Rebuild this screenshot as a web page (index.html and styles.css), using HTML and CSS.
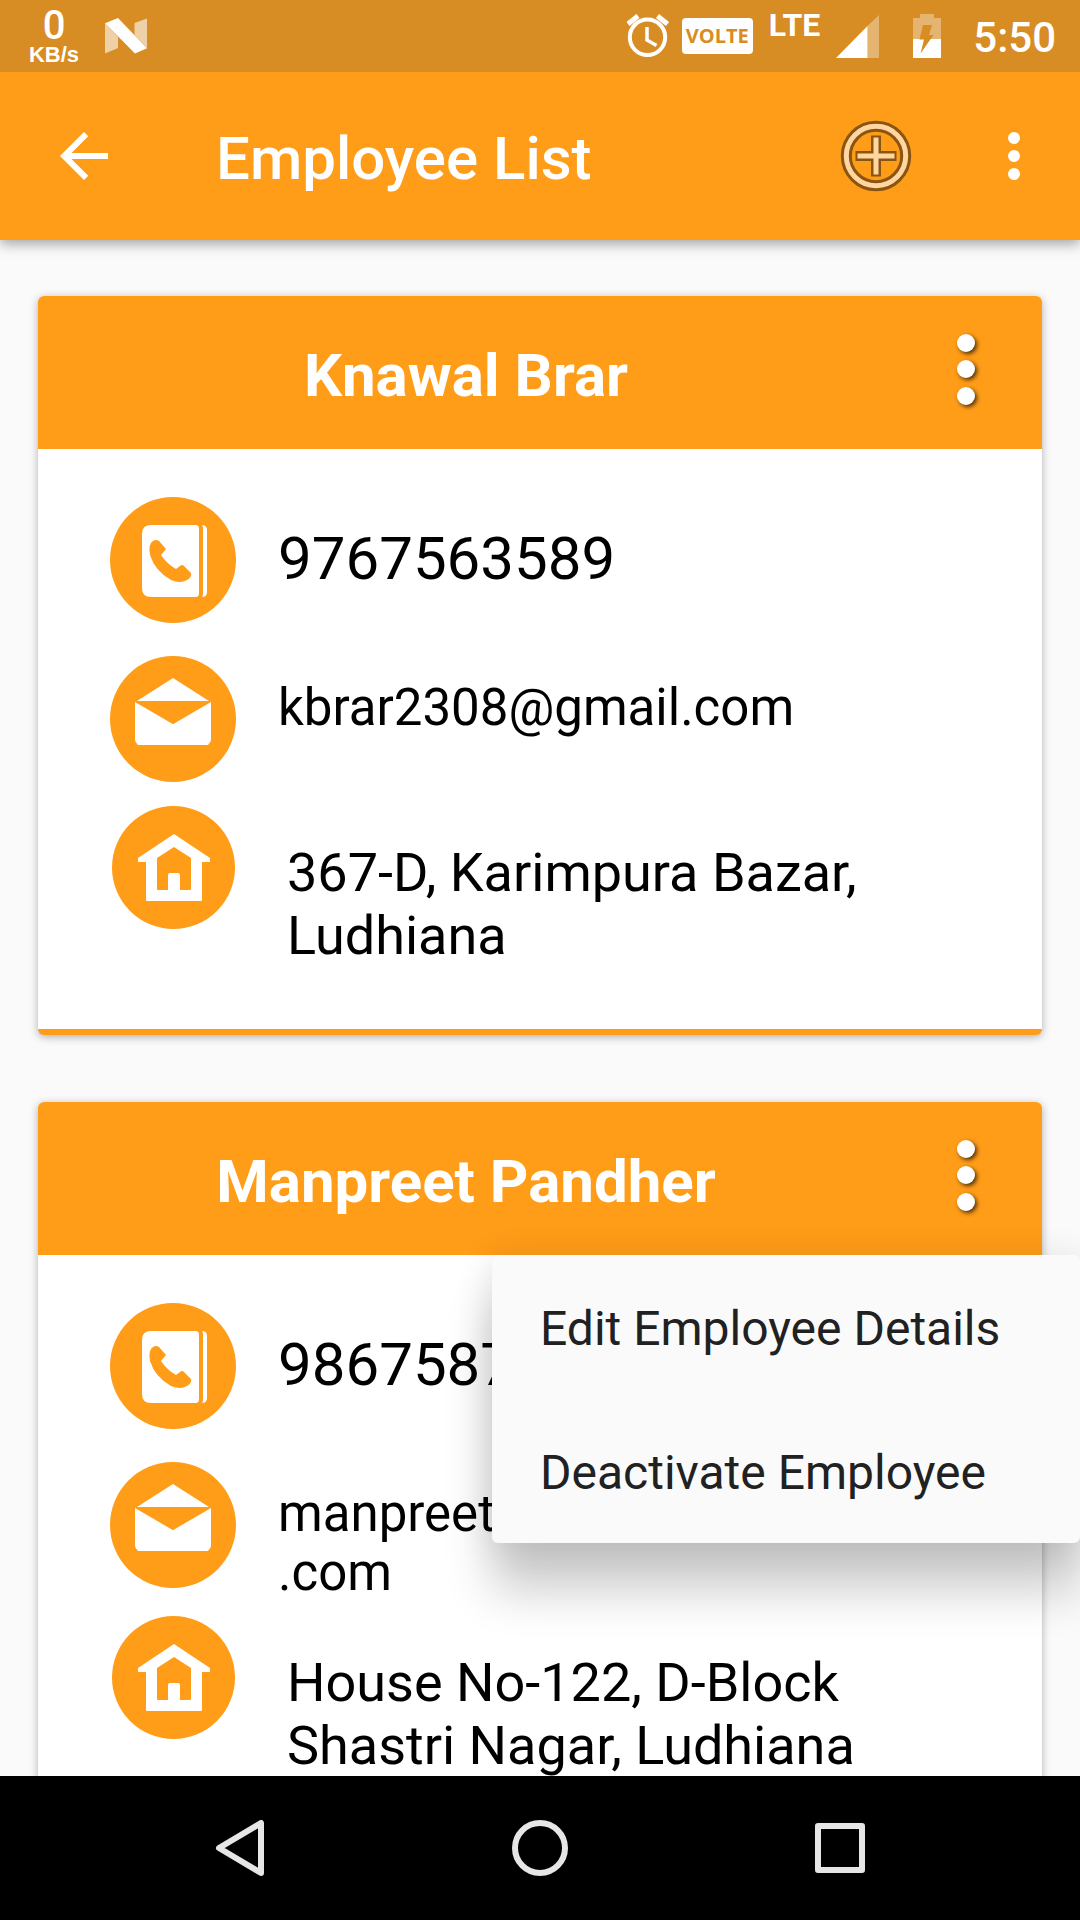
FILE: index.html
```html
<!DOCTYPE html>
<html lang="en">
<head>
<meta charset="utf-8">
<meta name="viewport" content="width=device-width, initial-scale=1">
<title>Employee List</title>
<link rel="stylesheet" href="styles.css">
</head>
<body>
<svg class="sprite" width="0" height="0" aria-hidden="true">
  <symbol id="i-phone" viewBox="0 0 126 126">
    <circle cx="63" cy="63" r="63" fill="#ff9c18"/>
    <path fill="#fff" d="M41 28H86Q89 28 89 32V96Q89 100 86 100H41Q32 100 32 91V37Q32 28 41 28ZM92 28Q97 28 97 33V95Q97 100 92 100Q93 99 93 96V32Q93 29 92 28Z"/>
    <path fill="#ff9c18" d="M49 44L56 52L51 58Q57 67 66 72L70 69Q72 67 74 69L81 76Q82 80 77 83Q70 87 61 83Q45 74 40 58Q38 47 43 44Q46 42 49 44Z"/>
  </symbol>
  <symbol id="i-mail" viewBox="0 0 126 126">
    <circle cx="63" cy="63" r="63" fill="#ff9c18"/>
    <path fill="#fff" d="M63 22L99 45H27ZM25 46L61 67Q63 69 65 67L101 46V84Q101 86 98 89H28Q25 86 25 84Z"/>
  </symbol>
  <symbol id="i-home" viewBox="0 0 123 123">
    <circle cx="61.5" cy="61.5" r="61.5" fill="#ff9c18"/>
    <path fill="#fff" fill-rule="evenodd" d="M62 28L98 52V56H90V94Q90 95 89 95H35Q34 95 34 94V56H26V52ZM62 41L45 52V83Q45 84 46 84H56V69Q56 67 58 67H66Q68 67 68 69V84H78Q79 84 79 83V52Z"/>
  </symbol>
  <symbol id="i-dots" viewBox="0 0 24 76">
    <g fill="#fff"><circle cx="12" cy="12" r="9"/><circle cx="12" cy="38" r="9"/><circle cx="12" cy="65" r="9"/></g>
  </symbol>
</svg>

<div class="status">
  <div class="speed"><span class="speed-value">0</span><span class="speed-unit">KB/s</span></div>
  <svg class="nougat" width="42" height="36" viewBox="0 0 42 36"><path fill="#fff" fill-opacity=".6" d="M0 5L13 19V30L0 35.5ZM29.5 5L42 .5V30L29.5 17Z"/><path fill="#fff" d="M0 5.300L13 0L42 30.300L30 35.5Z"/></svg>
  <div class="status-right">
    <svg class="alarm" width="42" height="44" viewBox="0 0 42 44" fill="none" stroke="#fff"><circle cx="20.5" cy="23.3" r="17.7" stroke-width="4"/><path stroke-width="3.5" d="M20 13V26L29.5 31.5"/><path stroke-width="5" d="M1 10L11 2M30.5 2L40.5 10"/></svg>
    <span class="volte">VOLTE</span>
    <span class="lte">LTE</span>
    <svg class="signal" width="43" height="43" viewBox="0 0 43 43"><path fill="#fff" d="M0 43L31.5 11V43Z"/><path fill="#fff" fill-opacity=".35" d="M31.5 11L43 0V43H31.5Z"/></svg>
    <svg class="battery" width="28" height="44" viewBox="0 0 28 44"><path fill="#fff" fill-opacity=".35" d="M7 0H21V4H28V25H0V4H7Z"/><path fill="#fff" d="M0 25H28V44H0Z"/><path fill="#d88c24" d="M10 11H19L16 21H20.5L7.5 39.5L11 25.5H6.5Z"/></svg>
    <time class="clock">5:50</time>
  </div>
</div>

<header class="appbar">
  <button class="back" type="button" aria-label="Back"><svg width="48" height="48" viewBox="4 4 16 16"><path fill="#fff" d="M20 11H7.83l5.59-5.59L12 4l-8 8 8 8 1.41-1.41L7.83 13H20v-2z"/></svg></button>
  <h1 class="title">Employee List</h1>
  <button class="add" type="button" aria-label="Add employee"><svg width="72" height="72" viewBox="-36 -36 72 72" fill="none"><circle r="29.7" stroke="#8a5510" stroke-width="11"/><circle r="29.7" stroke="#ffd6a2" stroke-width="5"/><path stroke="#8a5510" stroke-width="10" stroke-linejoin="round" d="M-20.5 0H20.5M0-20.5V20.5"/><path stroke="#ffd6a2" stroke-width="5" d="M-18.5 0H18.5M0-18.5V18.5"/></svg></button>
  <button class="more" type="button" aria-label="More options"><svg width="12" height="48" viewBox="0 0 12 48" fill="#fff"><circle cx="6" cy="6" r="6"/><circle cx="6" cy="24" r="6"/><circle cx="6" cy="42" r="6"/></svg></button>
</header>

<main class="list">
  <article class="card">
    <div class="card-head">
      <h2 class="name">Knawal Brar</h2>
      <button class="card-more" type="button" aria-label="Options for Knawal Brar"><svg class="dots" width="24" height="76"><use href="#i-dots"/></svg></button>
    </div>
    <div class="card-body">
      <div class="row row-phone"><svg class="icon"><use href="#i-phone"/></svg><p class="phone">9767563589</p></div>
      <div class="row row-mail"><svg class="icon"><use href="#i-mail"/></svg><p class="mail">kbrar2308@gmail.com</p></div>
      <div class="row"><svg class="icon icon-home"><use href="#i-home"/></svg><p class="address">367-D, Karimpura Bazar,<br>Ludhiana</p></div>
    </div>
  </article>

  <article class="card">
    <div class="card-head">
      <h2 class="name">Manpreet Pandher</h2>
      <button class="card-more" type="button" aria-label="Options for Manpreet Pandher" aria-expanded="true"><svg class="dots" width="24" height="76"><use href="#i-dots"/></svg></button>
      <div class="menu" role="menu">
        <button class="menu-item" type="button" role="menuitem">Edit Employee Details</button>
        <button class="menu-item" type="button" role="menuitem">Deactivate Employee</button>
      </div>
    </div>
    <div class="card-body">
      <div class="row row-phone"><svg class="icon"><use href="#i-phone"/></svg><p class="phone">9867587</p></div>
      <div class="row row-mail"><svg class="icon"><use href="#i-mail"/></svg><p class="mail">manpreet@gmail<br>.com</p></div>
      <div class="row"><svg class="icon icon-home"><use href="#i-home"/></svg><p class="address">House No-122, D-Block<br>Shastri Nagar, Ludhiana</p></div>
    </div>
  </article>
</main>

<nav class="navbar" aria-label="System">
  <button type="button" aria-label="Back"><svg width="56" height="56" viewBox="0 0 56 56"><path d="M7 28L49 3V53Z"/></svg></button>
  <button type="button" aria-label="Home"><svg width="56" height="56" viewBox="0 0 56 56"><circle cx="28" cy="28" r="25"/></svg></button>
  <button type="button" aria-label="Recent apps"><svg width="56" height="56" viewBox="0 0 56 56"><rect x="6" y="6" width="44" height="44"/></svg></button>
</nav>
</body>
</html>
```
FILE: styles.css
```css
* { box-sizing: border-box; margin: 0; padding: 0; }

body {
  height: 100vh;
  display: flex;
  flex-direction: column;
  background: #fafafa;
  color: #000;
  font-family: Roboto, "Noto Sans", sans-serif;
}

button { border: 0; background: none; font: inherit; color: inherit; cursor: pointer; }
svg { display: block; flex: none; }
.sprite { position: absolute; }

.status {
  flex: none;
  height: 72px;
  display: flex;
  align-items: center;
  padding: 0 24px 0 28px;
  background: #d88c24;
  color: #fff;
  z-index: 2;
}
.speed {
  width: 52px;
  display: flex;
  flex-direction: column;
  align-items: center;
  font-family: "Liberation Sans", Arial, sans-serif;
  font-weight: 700;
}
.speed-value { font-size: 40px; line-height: 38px; font-family: Roboto, sans-serif; font-weight: 500; }
.speed-unit { font-size: 22px; line-height: 20px; }
.nougat { margin-left: 25px; }
.status-right { margin-left: auto; display: flex; align-items: center; }
.volte {
  width: 71px;
  height: 36px;
  margin-left: 13px;
  border-radius: 4px;
  background: #fff;
  color: #d88c24;
  font: 700 20px/36px "Open Sans", sans-serif;
  text-align: center;
}
.lte { align-self: flex-start; margin: 0 16px; font-size: 32px; line-height: 30px; font-weight: 700; }
.battery { margin: 0 32px 0 34px; }
.clock { padding-top: 4px; font-size: 42px; line-height: 48px; font-weight: 500; }

.appbar {
  flex: none;
  height: 168px;
  display: flex;
  align-items: stretch;
  background: #ff9c18;
  color: #fff;
  box-shadow: 0 4px 12px rgba(0, 0, 0, .35);
  z-index: 1;
}
.appbar button { display: flex; align-items: center; justify-content: center; }
.back { width: 168px; }
.title { flex: 1; margin-left: 48px; padding-top: 4px; font-size: 60px; line-height: 166px; font-weight: 500; }
.add { width: 144px; }
.more { width: 132px; }

.list {
  flex: 1;
  min-height: 0;
  overflow: auto;
  scrollbar-width: none;
  padding: 56px 38px;
}
.card {
  margin-bottom: 67px;
  border-radius: 6px;
  border-bottom: 6px solid #ff9c18;
  background: #fff;
  box-shadow: 0 2px 8px rgba(0, 0, 0, .3);
}
.card-head {
  position: relative;
  height: 153px;
  display: flex;
  border-radius: 6px 6px 0 0;
  background: #ff9c18;
  color: #fff;
}
.name { flex: 1; padding: 6px 0 0 4px; font-size: 60px; line-height: 147px; font-weight: 700; text-align: center; }
.card-more { width: 152px; padding-bottom: 8px; display: flex; align-items: center; justify-content: center; }
.dots { filter: drop-shadow(2px 2px 2px rgba(0, 0, 0, .7)); }

.card-body { padding: 48px 72px 62px; }
.row { display: flex; align-items: flex-start; gap: 42px; }
.row-phone { margin-bottom: 33px; }
.row-mail { min-height: 136px; margin-bottom: 14px; }
.icon { width: 126px; height: 126px; }
.icon-home { width: 123px; height: 123px; margin: 0 1px 0 2px; }
.phone { padding-top: 27px; font-size: 60px; line-height: 70px; }
.mail { padding-top: 22px; font-size: 51px; line-height: 59px; }
.address { padding: 35px 0 0 9px; font-size: 54px; line-height: 63px; }

.menu {
  position: absolute;
  top: 100%;
  right: -38px;
  z-index: 2;
  width: 588px;
  border-radius: 6px;
  background: #fafafa;
  color: #212121;
  box-shadow: 0 48px 48px rgba(0, 0, 0, .2), 0 4px 36px rgba(0, 0, 0, .12);
}
.menu-item {
  display: block;
  width: 100%;
  padding: 4px 48px 0;
  font-size: 48px;
  line-height: 140px;
  text-align: left;
}

.navbar {
  flex: none;
  height: 144px;
  display: flex;
  padding: 0 90px;
  background: #000;
  z-index: 1;
}
.navbar button { flex: 1; display: flex; align-items: center; justify-content: center; }
.navbar svg { fill: none; stroke: #e6e6e6; stroke-width: 6; stroke-linejoin: round; }
```
